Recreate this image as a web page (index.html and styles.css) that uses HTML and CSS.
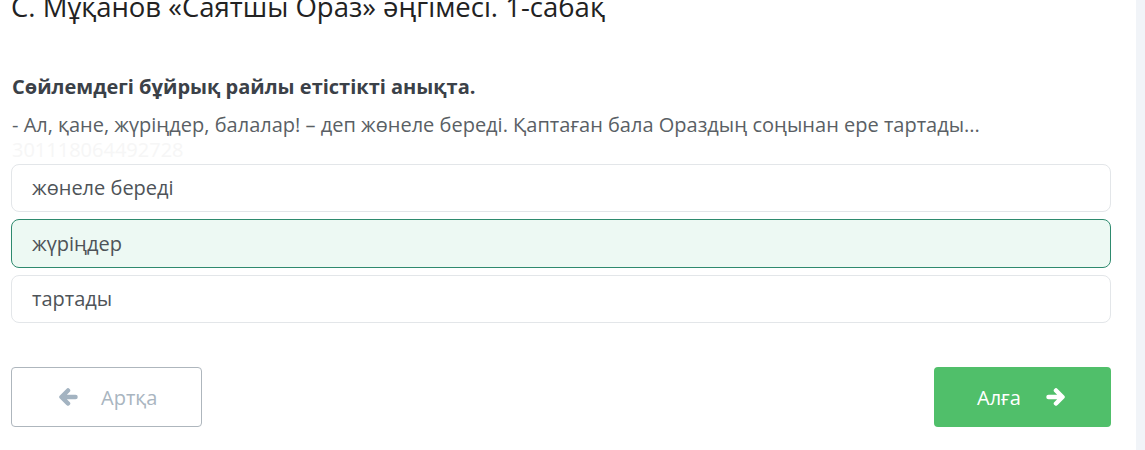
FILE: index.html
```html
<!DOCTYPE html>
<html lang="kk">
<head>
  <meta charset="UTF-8" />
  <title>Сабақ</title>
  <link rel="stylesheet" href="styles.css">
</head>
<body>
  <div class="page">
    <div class="main">
      <h1 class="title">С. Мұқанов «Саятшы Ораз» әңгімесі. 1-сабақ</h1>

      <p class="question">Сөйлемдегі бұйрық райлы етістікті анықта.</p>
      <p class="text">- Ал, қане, жүріңдер, балалар! – деп жөнеле береді. Қаптаған бала Ораздың соңынан ере тартады...</p>
      <div class="mark">301118064492728</div>

      <div class="answers">
        <div class="answer">жөнеле береді</div>
        <div class="answer selected">жүріңдер</div>
        <div class="answer">тартады</div>
      </div>

      <div class="nav">
        <button class="btn btn-back">
          <svg class="icon" viewBox="0 0 20 18"><path d="M17.5 9H4M10 2.5L3.5 9l6.5 6.5"/></svg>
          <span>Артқа</span>
        </button>
        <button class="btn btn-next">
          <span>Алға</span>
          <svg class="icon" viewBox="0 0 20 18"><path d="M2.5 9H16M10 2.5L16.5 9 10 15.5"/></svg>
        </button>
      </div>
    </div>
    <div class="side"></div>
  </div>
</body>
</html>
```

FILE: styles.css
```css
body { margin: 0; font-family: "Open Sans", "Noto Sans", sans-serif; background: #fff; overflow: hidden; }
.page { display: flex; height: 450px; }
.main { width: 1100px; padding: 0 25px 0 11px; }
.side { flex: 1; background: #f1f4f8; }

.title { margin: -11px 0 0 0; font-size: 27.5px; font-weight: 400; color: #222; line-height: 35px; white-space: nowrap; }

.question { margin: 50px 0 0 1px; font-size: 20px; font-weight: 700; color: #3b4148; line-height: 26px; }
.text { margin: 12px 0 0 1px; font-size: 20px; color: #5a5f65; line-height: 26px; }
.mark { margin: 0 0 0 1px; font-size: 20px; color: #f6f6f6; line-height: 24px; height: 26px; }

.answers { display: flex; flex-direction: column; gap: 7px; }
.answer { height: 46px; line-height: 46px; border: 1px solid #e3e6e9; border-radius: 8px; padding: 0 20px; font-size: 20px; color: #4e5358; }
.answer.selected { height: 47px; line-height: 47px; background: #edf9f3; border-color: #2e8a6e; }

.nav { display: flex; justify-content: space-between; margin-top: 44px; }
.btn { height: 60px; display: flex; align-items: center; font-family: inherit; font-size: 20px; border-radius: 4px; cursor: pointer; }
.btn-back { width: 191px; padding: 0 0 0 46px; background: #fff; border: 1px solid #aeb6bd; color: #a9b5c0; gap: 23px; }
.btn-back .icon { stroke: #a3b3c1; }
.btn-next { width: 177px; padding: 0 0 0 43px; background: #50bf6a; border: none; color: #fff; gap: 25px; }
.btn-next .icon { stroke: #fff; }
.icon { width: 20px; height: 18px; fill: none; stroke-width: 4.5; stroke-linecap: round; stroke-linejoin: round; }
```
